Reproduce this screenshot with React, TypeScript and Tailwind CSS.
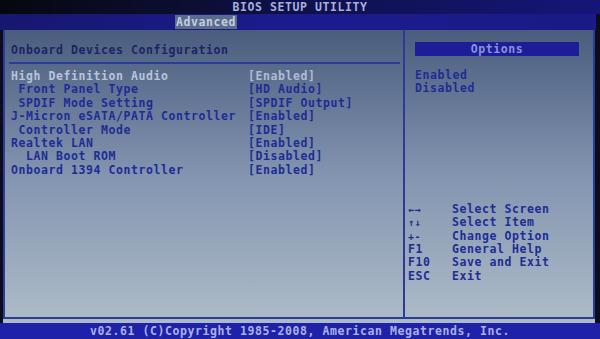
const rows: { label: string; value: string; active?: boolean }[] = [
  { label: "High Definition Audio", value: "[Enabled]", active: true },
  { label: " Front Panel Type", value: "[HD Audio]" },
  { label: " SPDIF Mode Setting", value: "[SPDIF Output]" },
  { label: "J-Micron eSATA/PATA Controller", value: "[Enabled]" },
  { label: " Controller Mode", value: "[IDE]" },
  { label: "Realtek LAN", value: "[Enabled]" },
  { label: "  LAN Boot ROM", value: "[Disabled]" },
  { label: "Onboard 1394 Controller", value: "[Enabled]" },
];

const keys = [
  ["←→", "Select Screen"],
  ["↑↓", "Select Item"],
  ["+-", "Change Option"],
  ["F1", "General Help"],
  ["F10", "Save and Exit"],
  ["ESC", "Exit"],
];

export default function App() {
  return (
    <div
      className="w-[600px] h-[339px] overflow-hidden flex flex-col bg-[#0c0c1c] text-[11.5px] tracking-[0.58px] font-bold"
      style={{ fontFamily: '"DejaVu Sans Mono", "Liberation Mono", monospace' }}
    >
      {/* title */}
      <div className="h-[14px] flex items-center justify-center bg-gradient-to-r from-[#07070f] via-[#10104a] to-[#15157a] text-[#a6b0e0] leading-[14px]">
        BIOS SETUP UTILITY
      </div>

      {/* tabs */}
      <div className="h-[16px] flex bg-gradient-to-r from-[#17176f] via-[#1b1b8e] to-[#1a1a86] pl-[175px] mr-[4px]">
        <div className="h-[14px] px-[1px] bg-[#5a6c8c] text-[#c4cee0] leading-[14px] mt-[1px]">Advanced</div>
      </div>

      {/* main */}
      <div className="h-[293px] mx-[3px] mr-[5px] pb-[4px] bg-gradient-to-b from-[#4b5d7e] via-[#8395b0] to-[#aebcc8]">
        <div className="h-full border-2 border-t-0 border-[#2c3a98] grid grid-cols-[400px_1fr]">
          <div className="border-r-2 border-[#2c3a98] pl-[4px] pt-[13px] pr-[3px]">
            <div className="text-[#1c2464] leading-[14px] pl-[2px]">Onboard Devices Configuration</div>
            <div className="mt-[5px] h-[2px] bg-[#2c3a98]" />
            <div className="mt-[6px] pl-[2px]">
              {rows.map((r) => (
                <div key={r.label} className="grid grid-cols-[237px_1fr] leading-[13.4px] whitespace-pre">
                  <span className={r.active ? "text-[#b8c4da]" : "text-[#1e2c96]"}>{r.label}</span>
                  <span className={r.active ? "text-[#b0bcd4]" : "text-[#1e2c96]"}>{r.value}</span>
                </div>
              ))}
            </div>
          </div>

          <div className="flex flex-col pt-[12px]">
            <div className="ml-[10px] w-[164px] h-[14px] bg-[#1d1d98] text-[#8a94d8] leading-[14px] text-center">
              Options
            </div>
            <div className="ml-[10px] mt-[13px] text-[#1e2c96] leading-[13.4px]">
              <div>Enabled</div>
              <div>Disabled</div>
            </div>
            <div className="ml-[3px] mt-[107px] text-[#1e2c96] leading-[13.4px]">
              {keys.map(([k, d]) => (
                <div key={d} className="grid grid-cols-[44px_1fr]">
                  <span className={k.length === 2 && !/F/.test(k) ? "text-[10px]" : ""}>{k}</span>
                  <span>{d}</span>
                </div>
              ))}
            </div>
          </div>
        </div>
      </div>

      {/* footer */}
      <div className="flex-1 bg-[#1f22a8] flex items-center justify-center text-[#aab2e6] leading-[14px]">
        v02.61 (C)Copyright 1985-2008, American Megatrends, Inc.
      </div>
    </div>
  );
}
